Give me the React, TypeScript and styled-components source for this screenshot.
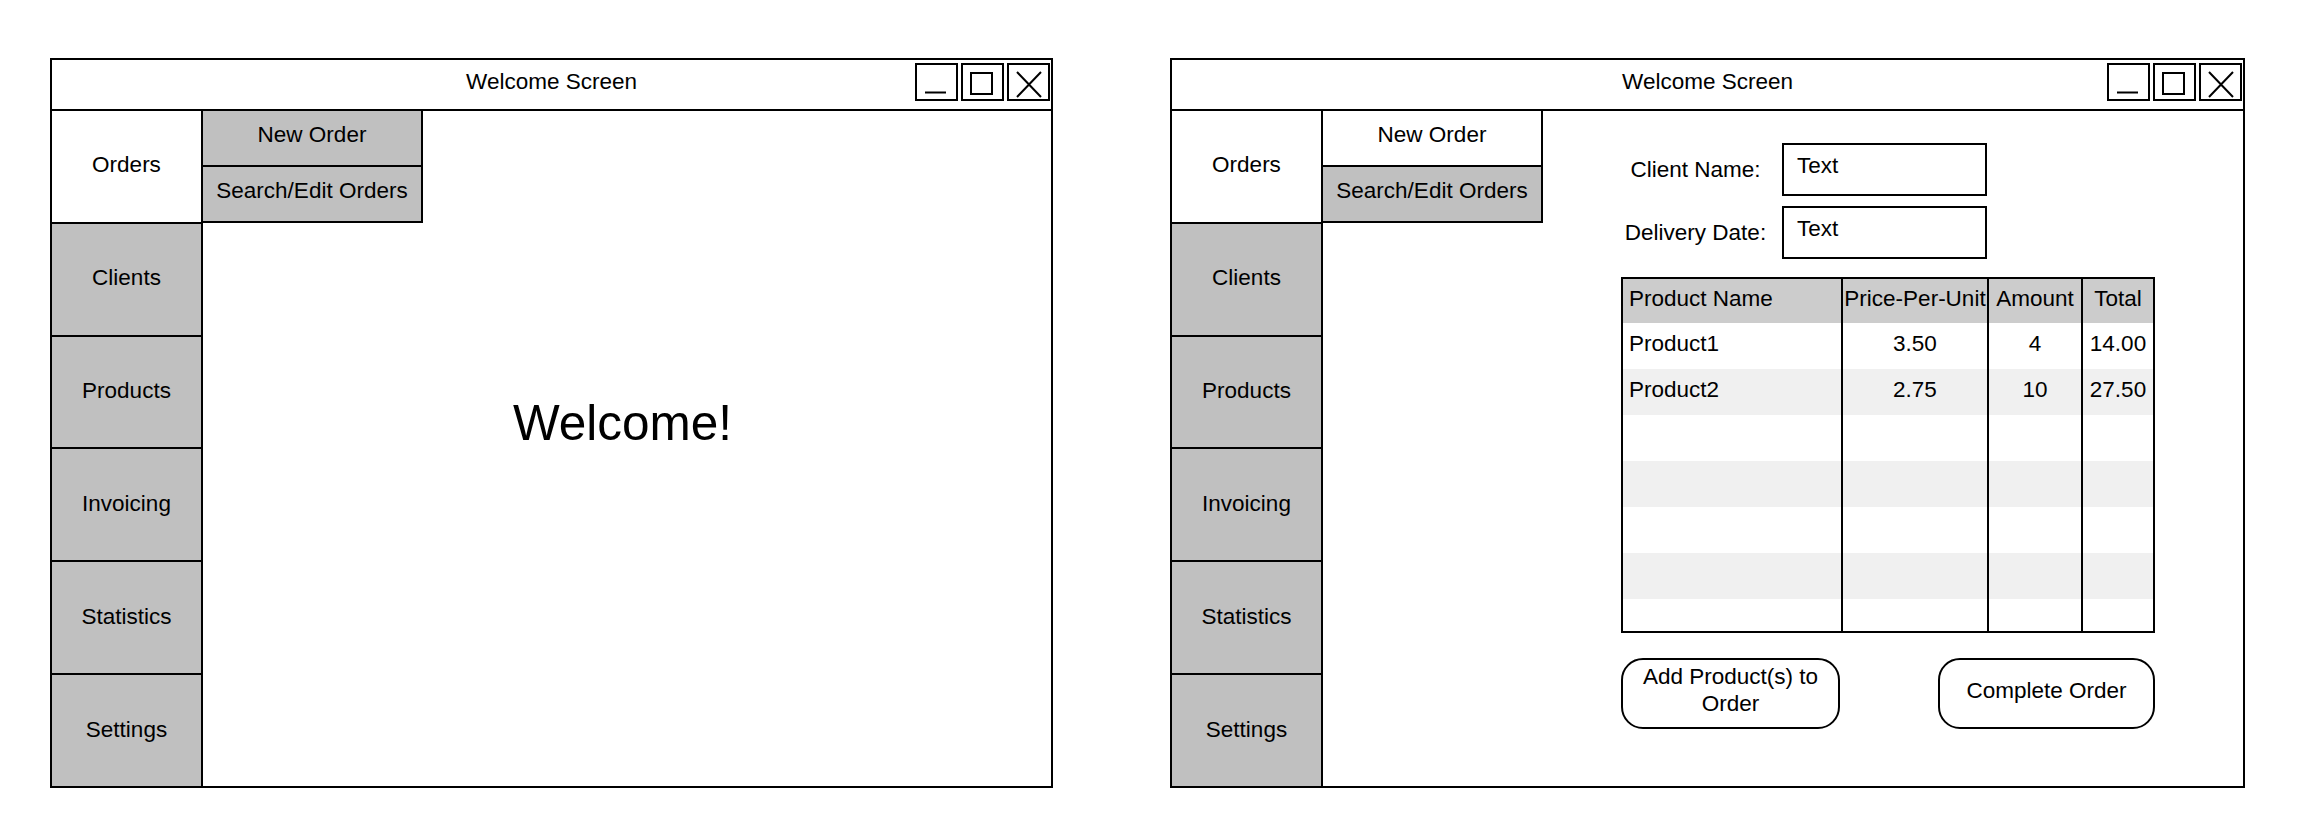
import React from 'react';
import styled, { createGlobalStyle } from 'styled-components';

const GlobalStyle = createGlobalStyle`
  body {
    margin: 0;
    background: #ffffff;
    font-family: 'Liberation Sans', Arial, sans-serif;
    color: #000000;
  }
  * {
    box-sizing: border-box;
  }
`;

const NAV_ITEMS = ['Orders', 'Clients', 'Products', 'Invoicing', 'Statistics', 'Settings'];

interface IProduct {
  name: string;
  price: string;
  amount: string;
  total: string;
}

const products: IProduct[] = [
  { name: 'Product1', price: '3.50', amount: '4', total: '14.00' },
  { name: 'Product2', price: '2.75', amount: '10', total: '27.50' },
];

const EMPTY_ROWS = 6;

const StPage = styled.div`
  display: flex;
  gap: 117px;
  padding: 58px 0 0 50px;
`;

const StWindow = styled.div<{ $width: number }>`
  width: ${(p) => p.$width}px;
  height: 730px;
  border: 2px solid #000;
  display: flex;
  flex-direction: column;
  font-size: 22.5px;
`;

const StTitleBar = styled.div`
  height: 51px;
  border-bottom: 2px solid #000;
  display: grid;
  grid-template-columns: 1fr auto 1fr;
  align-items: center;
`;

const StTitle = styled.div`
  grid-column: 2;
  padding-bottom: 6px;
`;

const StControls = styled.div`
  grid-column: 3;
  justify-self: end;
  align-self: start;
  display: flex;
  gap: 3px;
  margin: 3px 1px 0 0;
`;

const StControlBox = styled.div`
  width: 43px;
  height: 38px;
  border: 2px solid #000;
  display: flex;
`;

const StBody = styled.div`
  flex: 1;
  display: flex;
  align-items: stretch;
  min-height: 0;
`;

const StSidebar = styled.div`
  width: 151px;
  display: flex;
  flex-direction: column;
  border-right: 2px solid #000;
`;

const StNavItem = styled.div<{ $active?: boolean }>`
  flex: 1;
  display: flex;
  align-items: center;
  justify-content: center;
  padding-bottom: 2px;
  background: ${(p) => (p.$active ? '#ffffff' : '#c0c0c0')};
  border-bottom: 2px solid #000;

  &:last-child {
    border-bottom: none;
  }
`;

const StSubMenu = styled.div`
  width: 220px;
  align-self: flex-start;
  display: flex;
  flex-direction: column;
`;

const StSubItem = styled.div<{ $active?: boolean }>`
  height: 56px;
  display: flex;
  align-items: center;
  justify-content: center;
  padding-bottom: 6px;
  background: ${(p) => (p.$active ? '#ffffff' : '#c0c0c0')};
  border-right: 2px solid #000;
  border-bottom: 2px solid #000;
`;

const StWelcomeArea = styled.div`
  flex: 1;
  display: flex;
  align-items: center;
  justify-content: center;
  padding: 0 9px 53px 0;
  margin-left: -220px;
  pointer-events: none;
`;

const StWelcome = styled.div`
  font-size: 49.5px;
`;

const StFormArea = styled.div`
  display: flex;
  flex-direction: column;
  padding: 32px 0 0 78px;
`;

const StFieldRow = styled.div`
  display: flex;
  align-items: center;
  gap: 12px;
  margin-bottom: 10px;
`;

const StLabel = styled.div`
  width: 149px;
  text-align: center;
`;

const StTextBox = styled.div`
  width: 205px;
  height: 53px;
  border: 2px solid #000;
  padding: 8px 13px 0;
`;

const StTable = styled.div`
  width: 534px;
  height: 356px;
  margin-top: 8px;
  border: 2px solid #000;
  overflow: hidden;
`;

const StRow = styled.div<{ $shade: 'head' | 'stripe' | 'plain' }>`
  display: grid;
  grid-template-columns: 220px 146px 94px 1fr;
  height: ${(p) => (p.$shade === 'head' ? 44 : 46)}px;
  background: ${(p) =>
    p.$shade === 'head' ? '#cccccc' : p.$shade === 'stripe' ? '#f0f0f0' : '#ffffff'};
`;

const StCell = styled.div<{ $align?: 'left' | 'center' }>`
  display: flex;
  align-items: center;
  justify-content: ${(p) => (p.$align === 'left' ? 'flex-start' : 'center')};
  padding: 0 0 5px ${(p) => (p.$align === 'left' ? '6px' : '0')};
  border-right: 2px solid #000;
  white-space: nowrap;

  &:last-child {
    border-right: none;
  }
`;

const StActions = styled.div`
  width: 534px;
  display: flex;
  justify-content: space-between;
  margin-top: 25px;
`;

const StButton = styled.div<{ $width: number }>`
  width: ${(p) => p.$width}px;
  height: 71px;
  border: 2px solid #000;
  border-radius: 22px;
  display: flex;
  align-items: center;
  justify-content: center;
  text-align: center;
  line-height: 1.18;
  padding: 0 12px 5px;
`;

const WindowControls = () => (
  <StControls>
    <StControlBox>
      <svg width="39" height="34" viewBox="0 0 39 34">
        <line x1="8" y1="27.5" x2="29" y2="27.5" stroke="#000" strokeWidth="2" />
      </svg>
    </StControlBox>
    <StControlBox>
      <svg width="39" height="34" viewBox="0 0 39 34">
        <rect x="8" y="8" width="21" height="21" fill="none" stroke="#000" strokeWidth="2" />
      </svg>
    </StControlBox>
    <StControlBox>
      <svg width="39" height="34" viewBox="0 0 39 34">
        <path d="M8 7 L32 32 M32 7 L8 32" stroke="#000" strokeWidth="2" fill="none" />
      </svg>
    </StControlBox>
  </StControls>
);

const Sidebar = () => (
  <StSidebar>
    {NAV_ITEMS.map((item, i) => (
      <StNavItem key={item} $active={i === 0}>
        {item}
      </StNavItem>
    ))}
  </StSidebar>
);

const SubMenu = ({ newOrderActive }: { newOrderActive?: boolean }) => (
  <StSubMenu>
    <StSubItem $active={newOrderActive}>New Order</StSubItem>
    <StSubItem>Search/Edit Orders</StSubItem>
  </StSubMenu>
);

const Window = ({ width, children }: { width: number; children: React.ReactNode }) => (
  <StWindow $width={width}>
    <StTitleBar>
      <StTitle>Welcome Screen</StTitle>
      <WindowControls />
    </StTitleBar>
    <StBody>{children}</StBody>
  </StWindow>
);

const OrderForm = () => {
  const blanks = Array.from({ length: EMPTY_ROWS });

  return (
    <StFormArea>
      <StFieldRow>
        <StLabel>Client Name:</StLabel>
        <StTextBox>Text</StTextBox>
      </StFieldRow>
      <StFieldRow>
        <StLabel>Delivery Date:</StLabel>
        <StTextBox>Text</StTextBox>
      </StFieldRow>

      <StTable>
        <StRow $shade="head">
          <StCell $align="left">Product Name</StCell>
          <StCell>Price-Per-Unit</StCell>
          <StCell>Amount</StCell>
          <StCell>Total</StCell>
        </StRow>
        {products.map((el, i) => (
          <StRow key={el.name} $shade={i % 2 === 1 ? 'stripe' : 'plain'}>
            <StCell $align="left">{el.name}</StCell>
            <StCell>{el.price}</StCell>
            <StCell>{el.amount}</StCell>
            <StCell>{el.total}</StCell>
          </StRow>
        ))}
        {blanks.map((_, i) => (
          <StRow key={i} $shade={(i + products.length) % 2 === 1 ? 'stripe' : 'plain'}>
            <StCell />
            <StCell />
            <StCell />
            <StCell />
          </StRow>
        ))}
      </StTable>

      <StActions>
        <StButton $width={219}>Add Product(s) to Order</StButton>
        <StButton $width={217}>Complete Order</StButton>
      </StActions>
    </StFormArea>
  );
};

const App = () => {
  return (
    <>
      <GlobalStyle />
      <StPage>
        <Window width={1003}>
          <Sidebar />
          <SubMenu />
          <StWelcomeArea>
            <StWelcome>Welcome!</StWelcome>
          </StWelcomeArea>
        </Window>
        <Window width={1075}>
          <Sidebar />
          <SubMenu newOrderActive />
          <OrderForm />
        </Window>
      </StPage>
    </>
  );
};

export default App;
